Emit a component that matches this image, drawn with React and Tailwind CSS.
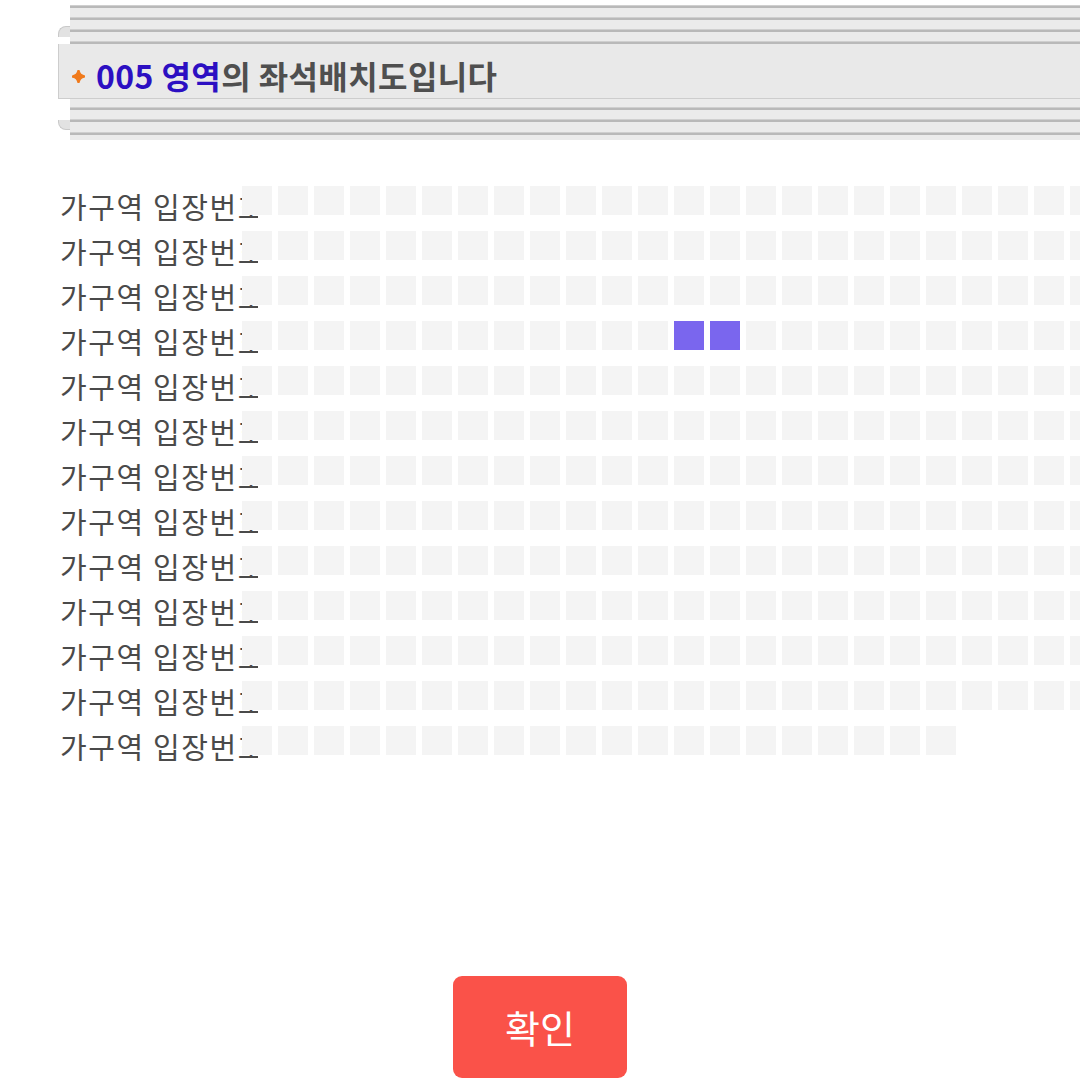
import React from "react";

const ROWS = 13;
const COLS = 24;
const LAST_ROW_COLS = 20;
const picked = { 3: [12, 13] };

const Line = () => (
  <div>
    <div className="h-[1px] bg-[#cfcfcf]" />
    <div className="h-[2px] bg-[#b9b9b9]" />
  </div>
);

const Gap = ({ h }) => <div className={h + " bg-[#ebebeb]"} />;

const Diamond = () => (
  <svg width="13" height="13" viewBox="0 0 12 12" className="mr-[11px] mt-[4px] shrink-0">
    <path d="M6 0.8 Q6.9 5.1 11.2 6 Q6.9 6.9 6 11.2 Q5.1 6.9 0.8 6 Q5.1 5.1 6 0.8 Z" fill="#f07a1c" stroke="#f07a1c" strokeWidth="2.2" strokeLinejoin="round" />
  </svg>
);

const Seat = ({ on }) => (
  <div className={on ? "w-[30px] h-[29px] shrink-0 bg-[#7a66ee]" : "w-[30px] h-[29px] shrink-0 bg-[#f4f4f4]"} />
);

export default function App() {
  const rows = Array.from({ length: ROWS }, (_, i) => i);

  return (
    <div
      className="w-[1080px] h-[1080px] bg-white overflow-hidden"
      style={{ fontFamily: '"Noto Sans CJK KR", "Noto Sans", sans-serif' }}
    >
      {/* header */}
      <div className="pl-[58px] pt-[5px]">
        <div className="flex">
          <div className="w-[12px] shrink-0 flex flex-col">
            <div className="h-[21px]" />
            <div className="h-[11px] rounded-tl-[8px] bg-[#e2e2e2] border-l border-t border-[#c9c9c9]" />
          </div>
          <div className="flex-1">
            <Line />
            <Gap h="h-[9px]" />
            <Line />
            <Gap h="h-[9px]" />
            <Line />
            <Gap h="h-[9px]" />
            <Line />
          </div>
        </div>
        <div className="h-[55px] flex items-center pl-[13px] pt-[7px] bg-[#e9e9e9] border-l border-b border-[#cdcdcd]">
          <Diamond />
          <span className="text-[32px] font-bold leading-none tracking-[0.4px] text-[#2c0fc2]">005 영역</span>
          <span className="text-[32px] font-bold leading-none tracking-[0.4px] text-[#4f4f4f]">의 좌석배치도입니다</span>
        </div>
        <div className="flex">
          <div className="w-[12px] shrink-0 flex flex-col">
            <div className="h-[21px]" />
            <div className="h-[10px] rounded-bl-[8px] bg-[#e2e2e2] border-l border-b border-[#c9c9c9]" />
          </div>
          <div className="flex-1">
            <Gap h="h-[8px]" />
            <Line />
            <Gap h="h-[9px]" />
            <Line />
            <Gap h="h-[10px]" />
            <Line />
            <Gap h="h-[5px]" />
          </div>
        </div>
      </div>

      {/* seat map */}
      <div className="mt-[46px] pl-[60px] flex flex-col gap-[16px]">
        {rows.map((r) => {
          const count = r === ROWS - 1 ? LAST_ROW_COLS : COLS;
          return (
            <div key={r} className="flex items-center h-[29px]">
              <div className="w-[198px] mt-[12px] shrink-0 overflow-hidden whitespace-nowrap text-[29px] tracking-[1.6px] leading-none text-[#4a4a4a]">
                가구역 입장번호
              </div>
              <div className="relative z-10 flex gap-[6px] ml-[-16px]">
                {Array.from({ length: count }, (_, c) => (
                  <Seat key={c} on={(picked[r] || []).includes(c)} />
                ))}
              </div>
            </div>
          );
        })}
      </div>

      {/* confirm */}
      <div className="flex justify-center mt-[221px]">
        <button className="w-[174px] h-[102px] rounded-[9px] bg-[#fa5249] text-white text-[38px] leading-none">
          확인
        </button>
      </div>
    </div>
  );
}
